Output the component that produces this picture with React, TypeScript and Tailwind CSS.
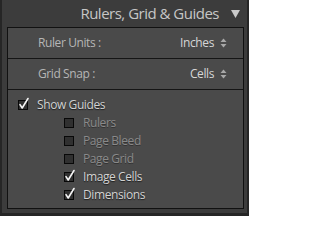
import React from "react";

const font = { fontFamily: '"Open Sans", "Liberation Sans", sans-serif' };

const UpDown = () => (
  <svg width="7" height="10" viewBox="0 0 7 10" className="ml-[6px]">
    <path d="M3.5 0.5 L6.5 4 H0.5 Z" fill="#a8a8a8" />
    <path d="M3.5 9.5 L6.5 6 H0.5 Z" fill="#a8a8a8" />
  </svg>
);

// box is 10x10 at (2,4) inside a 14x14 drawing; the tick may run past the box
const Check = ({ on }: { on: boolean }) => (
  <svg width="14" height="14" viewBox="0 0 14 14" className="shrink-0 -mx-[2px] -mt-[4px]">
    <rect x="2.5" y="4.5" width="9" height="9" fill="#303030" stroke="#080808" />
    {on && (
      <path
        d="M4 8.6 L6.2 12 L12 2.5"
        fill="none"
        stroke="#f4f4f4"
        strokeWidth="1.6"
        strokeLinecap="round"
        strokeLinejoin="round"
      />
    )}
  </svg>
);

const SubItem = ({ label, on, dim }: { label: string; on: boolean; dim?: boolean }) => (
  <div className="flex items-center h-[18px] pl-[56px] gap-[9px]">
    <Check on={on} />
    <span
      className={
        dim
          ? "text-[12px] tracking-[-0.4px] text-[#8a8a8a] [text-shadow:0_1px_0_#333]"
          : "text-[12px] tracking-[-0.4px] text-[#d2d2d2] [text-shadow:0_1px_1px_#1e1e1e]"
      }
    >
      {label}
    </span>
  </div>
);

export default function App() {
  return (
    <div className="w-[249px] h-[216px] bg-[#262626] flex" style={font}>
      <div className="ml-[2px] w-[245px] h-[213px] bg-[#3c3c3c] flex flex-col">
        {/* header */}
        <div className="h-[27px] flex items-center justify-end pr-[7px]">
          <span className="text-[15px] tracking-[-0.5px] text-[#c6c6c6] leading-none">
            Rulers, Grid &amp; Guides
          </span>
          <svg width="9" height="8" viewBox="0 0 9 8" className="ml-[12px]">
            <path d="M0 0 H9 L4.5 8 Z" fill="#cacaca" />
          </svg>
        </div>

        {/* settings box */}
        <div className="ml-[5px] w-[237px] border border-[#111] bg-[#4a4a4a] flex flex-col">
          <div className="h-[31px] border-b border-[#151515] flex items-center justify-between pl-[30px] pr-[16px] text-[12px] tracking-[-0.4px]">
            <span className="text-[#b6b6b6]">Ruler Units :</span>
            <span className="flex items-center text-[#d6d6d6]">
              Inches
              <UpDown />
            </span>
          </div>
          <div className="h-[31px] border-b border-[#151515] flex items-center justify-between pl-[30px] pr-[16px] text-[12px] tracking-[-0.4px]">
            <span className="text-[#b6b6b6]">Grid Snap :</span>
            <span className="flex items-center text-[#d6d6d6]">
              Cells
              <UpDown />
            </span>
          </div>
          <div className="h-[118px] pt-[6px] flex flex-col">
            <div className="flex items-center h-[18px] pl-[10px] gap-[9px]">
              <Check on />
              <span className="text-[12px] tracking-[-0.4px] text-[#d2d2d2] [text-shadow:0_1px_1px_#1e1e1e]">
                Show Guides
              </span>
            </div>
            <SubItem label="Rulers" on={false} dim />
            <SubItem label="Page Bleed" on={false} dim />
            <SubItem label="Page Grid" on={false} dim />
            <SubItem label="Image Cells" on />
            <SubItem label="Dimensions" on />
          </div>
        </div>
      </div>
    </div>
  );
}
